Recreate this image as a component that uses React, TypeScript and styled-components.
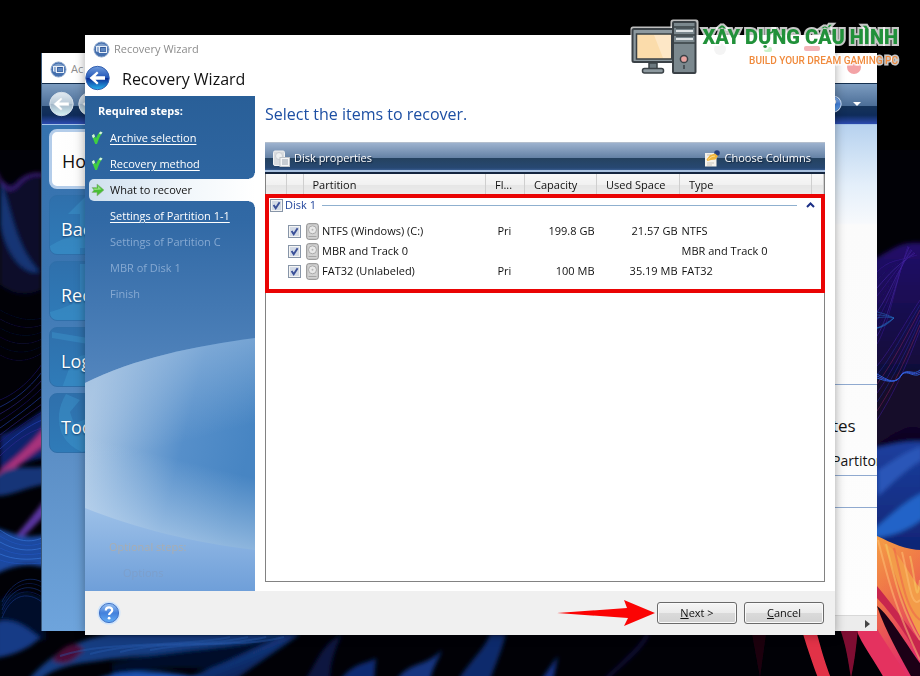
import React, { useState } from "react";
import styled, { createGlobalStyle, css } from "styled-components";

const GlobalStyle = createGlobalStyle`
  *, *::before, *::after { box-sizing: border-box; }
  html, body { margin: 0; background: #000; }
  body, button, input, table {
    font-family: "Open Sans", "Noto Sans", sans-serif;
    font-size: 11px;
    line-height: 16px;
  }
`;

/* ---------- desktop ---------- */

const Desktop = styled.main`
  position: relative;
  min-height: 100vh;
  overflow: hidden;
  background: #000;
`;

const WallpaperSvg = styled.svg`
  position: absolute;
  inset: 0;
  width: 100%;
  height: 100%;
`;

const BackWindow = styled.section`
  position: absolute;
  inset: 53px 43px 45px 41px;
  display: flex;
  flex-direction: column;
  overflow: hidden;
  background: #fff;
  border-left: 1px solid #3b5878;
`;

const FrontWindow = styled.section`
  position: absolute;
  inset: 35px 85px 41px 85px;
  display: flex;
  flex-direction: column;
  background: #fff;
  box-shadow: 0 0 10px rgba(0, 0, 0, 0.35);
`;

const TitleBar = styled.header<{ $height: number }>`
  display: flex;
  align-items: center;
  gap: 4px;
  flex: none;
  height: ${(p) => p.$height}px;
  padding: 2px 8px 0;
  color: #8d8d8d;
  background: #fff;
`;

/* ---------- window behind ---------- */

const NavBar = styled.div`
  display: flex;
  align-items: center;
  gap: 4px;
  flex: none;
  height: 42px;
  padding: 0 15px 0 7px;
  border-top: 1px solid #15304f;
  border-bottom: 1px solid #a5c4ea;
  background: linear-gradient(#7c9cc0 0, #4d6f98 54%, #15335a 56%, #0f2c5a 78%, #2c4bb0 100%);
`;

const Spacer = styled.span`
  flex: 1;
`;

const BackBody = styled.div`
  display: flex;
  flex: 1;
  min-height: 0;
`;

const Menu = styled.nav`
  display: flex;
  flex-direction: column;
  gap: 6px;
  width: 170px;
  padding: 4px 7px;
  background: linear-gradient(#3572ae 0, #3b76b2 30%, #5c8fc6 65%, #6ea4dc 100%);
`;

const MenuButton = styled.button<{ $active?: boolean }>`
  position: relative;
  height: 60px;
  padding: 8px 11px 0;
  overflow: hidden;
  text-align: left;
  font-size: 18px;
  line-height: 24px;
  color: #fff;
  text-shadow: 0 1px 2px #123d6b;
  border: 1px solid #2f6fa9;
  border-radius: 8px;
  background: linear-gradient(#2f70ac, #2f7bb8);
  ${(p) =>
    p.$active &&
    css`
      padding: 4px 10px 0;
      color: #111;
      text-shadow: none;
      border: 3px solid #b4cdea;
      background: linear-gradient(90deg, #fff, #f2f2f2);
    `}
`;

const MenuArt = styled.svg`
  position: absolute;
  left: 0;
  top: 0;
`;

const MenuText = styled.span`
  position: relative;
`;

const BackMain = styled.div`
  display: flex;
  flex-direction: column;
  flex: 1;
  color: #151515;
  background: linear-gradient(#b7d2ef 0, #e4effa 60px, #f7f9fc 98px, #fbfbfb 100px, #fdfdfd 100%);
`;

const BackSection = styled.div<{ $height: number }>`
  display: flex;
  flex-direction: column;
  justify-content: flex-end;
  gap: 12px;
  height: ${(p) => p.$height}px;
  padding: 0 0 3px calc(100% - 45px);
  border-bottom: 1px solid #8fa9cf;
  white-space: nowrap;
  font-size: 14px;
  line-height: 22px;
`;

const BackHeading = styled.strong`
  font-size: 17px;
  line-height: 24px;
  font-weight: 400;
`;

const HScroll = styled.div`
  display: flex;
  align-items: center;
  justify-content: flex-end;
  height: 16px;
  margin-top: auto;
  padding-right: 7px;
  border-top: 1px solid #d8d8d8;
  background: #ececec;
`;

/* ---------- wizard ---------- */

const WizardHeader = styled.div`
  display: flex;
  align-items: center;
  gap: 12px;
  flex: none;
  height: 35px;
  padding-bottom: 2px;
`;

const WizardTitle = styled.h1`
  margin: 0;
  padding-top: 2px;
  font-size: 16px;
  line-height: 22px;
  font-weight: 400;
  color: #111;
`;

const RoundButton = styled.button`
  display: flex;
  padding: 0;
  border: 0;
  background: none;
`;

const WizardBody = styled.div`
  display: flex;
  flex: 1;
  min-height: 0;
`;

const Sidebar = styled.aside`
  position: relative;
  display: flex;
  flex-direction: column;
  flex: none;
  width: 170px;
  padding: 5px 0 0;
  color: #fff;
`;

const SidebarArt = styled.svg`
  position: absolute;
  inset: 0;
  width: 100%;
  height: 100%;
`;

const StepsTitle = styled.h2`
  position: relative;
  margin: 0 0 6px;
  padding: 2px 0 2px 13px;
  font-size: 11px;
  line-height: 16px;
  font-weight: 700;
`;

const Steps = styled.ol`
  position: relative;
  flex: 1;
  margin: 0;
  padding: 0;
  list-style: none;
`;

const Step = styled.li<{ $state: string }>`
  position: relative;
  display: flex;
  align-items: center;
  height: 22px;
  margin: 0 0 4px 4px;
  color: ${(p) => (p.$state === "off" ? "#86a9d2" : "#fff")};
  ${(p) =>
    p.$state === "current" &&
    css`
      color: #111;
      border-radius: 5px 0 0 5px;
      background: linear-gradient(90deg, #cfe0ee, #f2f7fb 60%, #fff);
      &::before,
      &::after {
        content: "";
        position: absolute;
        right: 0;
        width: 6px;
        height: 6px;
      }
      &::before {
        top: -6px;
        background: radial-gradient(circle at 0 0, transparent 5px, #fff 6px);
      }
      &::after {
        bottom: -6px;
        background: radial-gradient(circle at 0 100%, transparent 5px, #fff 6px);
      }
    `}
`;

const StepMark = styled.span`
  display: flex;
  width: 21px;
  padding-left: 2px;
`;

const StepLink = styled.a`
  color: #fff;
  text-underline-offset: 2px;
`;

const Optional = styled.div<{ $faint?: boolean }>`
  position: relative;
  height: 26px;
  padding-left: ${(p) => (p.$faint ? 38 : 24)}px;
  color: ${(p) => (p.$faint ? "#7d9fcb" : "#a9adb0")};
`;

const Content = styled.div`
  display: flex;
  flex-direction: column;
  flex: 1;
  min-width: 0;
  padding: 6px 10px 9px;
`;

const Instruction = styled.h2`
  margin: 0 0 16px;
  font-size: 16px;
  line-height: 24px;
  font-weight: 400;
  color: #1d4fa3;
`;

const Toolbar = styled.div`
  display: flex;
  align-items: center;
  justify-content: space-between;
  flex: none;
  height: 32px;
  padding: 1px 14px 0 8px;
  border-top: 1px solid #b4bfce;
  border-bottom: 2px solid #14253f;
  background: linear-gradient(#9db2ce 0, #6683a6 50%, #25425f 52%, #274872 86%, #35588a 92%, #a9c1df 94%);
`;

const ToolButton = styled.button`
  display: flex;
  align-items: center;
  gap: 4px;
  padding: 0;
  border: 0;
  color: #fff;
  background: none;
  text-shadow: 1px 1px 1px #14253f;
`;

const Panel = styled.div`
  flex: 1;
  min-height: 0;
  border: 1px solid #828282;
  border-top: 0;
`;

const Marked = styled.div`
  position: relative;
  margin: 0 -1px;
  padding: 0 1px 12px;
`;

const MarkFrame = styled.span`
  position: absolute;
  inset: 20px 0 0;
  border: 4px solid #ea0404;
  pointer-events: none;
`;

const Table = styled.table`
  width: 100%;
  table-layout: fixed;
  border-collapse: collapse;
  color: #111;
  td,
  th {
    padding: 0;
    font-weight: 400;
    text-align: left;
    white-space: nowrap;
  }
`;

const Col = styled.col<{ $w?: number }>`
  width: ${(p) => (p.$w ? `${p.$w}px` : "auto")};
`;

const HeadCell = styled.th`
  height: 21px;
  border-right: 1px solid #cfcfcf;
  background: linear-gradient(#f8f8f8 0, #f1f1f1 50%, #e5e5e5 52%, #ededed 100%);
  && {
    padding: 0 0 0 9px;
  }
`;

const Row = styled.tr`
  height: 20px;
`;

const NumCell = styled.td`
  && {
    padding-right: 2px;
    text-align: right;
  }
`;

const FlagCell = styled.td`
  && {
    padding-left: 12px;
  }
`;

const TypeCell = styled.td`
  && {
    padding-left: 2px;
  }
`;

const CheckCell = styled.td`
  && {
    padding-left: 22px;
  }
`;

const NameLabel = styled.label`
  display: flex;
  align-items: center;
  gap: 3px;
  padding-left: 3px;
`;

const GroupCell = styled.td`
  height: 26px;
  vertical-align: top;
`;

const GroupLine = styled.div`
  display: flex;
  align-items: center;
  height: 20px;
  padding: 0 9px 0 4px;
  color: #22459c;
`;

const GroupLabel = styled.label`
  padding: 0 6px 0 2px;
`;

const Rule = styled.span`
  flex: 1;
  height: 1px;
  margin-right: 9px;
  background: #8fb0cf;
`;

const Collapse = styled.button`
  display: flex;
  padding: 0;
  border: 0;
  background: none;
`;

const Check = styled.input`
  appearance: none;
  display: block;
  flex: none;
  width: 13px;
  height: 13px;
  margin: 0;
  border: 1px solid #8795a8;
  outline: 1px solid #f4f4f4;
  outline-offset: -2px;
  background: #d3dae6;
  &:checked {
    background: #d3dae6
      url("data:image/svg+xml,%3Csvg xmlns='http://www.w3.org/2000/svg' viewBox='0 0 11 11'%3E%3Cpath d='M2.6 5 4.7 8.3 8.6 2.2' fill='none' stroke='%23394f98' stroke-width='1.9'/%3E%3C/svg%3E");
  }
`;

const Footer = styled.footer`
  display: flex;
  align-items: center;
  flex: none;
  height: 44px;
  padding: 0 11px 0 12px;
  background: #f0f0f0;
`;

const ActionButton = styled.button`
  width: 80px;
  height: 22px;
  margin-left: 7px;
  padding: 0;
  line-height: 18px;
  color: #111;
  border: 1px solid #6a6a6a;
  border-radius: 3px;
  background: linear-gradient(#f5f5f5 0, #ebebeb 50%, #dadada 52%, #d2d2d2 100%);
  box-shadow: inset 0 0 0 1px #fafafa;
`;

const ArrowArt = styled.svg`
  margin-right: -5px;
`;

/* ---------- watermark ---------- */

const Watermark = styled.div`
  position: absolute;
  top: 18px;
  right: 22px;
  display: flex;
  align-items: flex-start;
  gap: 3px;
  text-align: right;
`;

const Blots = styled.svg`
  position: absolute;
  right: 0;
  top: 0;
`;

const BrandName = styled.div`
  position: relative;
  padding-top: 4px;
  font-family: Roboto, "Open Sans", sans-serif;
  font-size: 20px;
  line-height: 30px;
  font-weight: 900;
  white-space: nowrap;
  color: #21913a;
  background: linear-gradient(90deg, #35a83f, #0c7430);
  -webkit-text-stroke: 4px rgba(255, 255, 255, 0.78);
  paint-order: stroke fill;
  background: none;
`;

const BrandTag = styled.div`
  position: relative;
  font-family: Roboto, "Open Sans", sans-serif;
  font-size: 10px;
  line-height: 17px;
  font-weight: 500;
  white-space: nowrap;
  color: #f08a3c;
  -webkit-text-stroke: 3px rgba(255, 255, 255, 0.78);
  paint-order: stroke fill;
`;

/* ---------- drawings ---------- */

const strands = (
  count: number,
  make: (i: number) => string,
  colors: string[],
  width = 1,
  opacity = 0.5
) =>
  Array.from({ length: count }, (_, i) => (
    <path key={i} d={make(i)} fill="none" stroke={colors[i % colors.length]} strokeWidth={width} opacity={opacity} />
  ));

const Wallpaper = () => (
  <WallpaperSvg viewBox="0 0 920 676" preserveAspectRatio="none" aria-hidden="true">
    <defs>
      <linearGradient id="wBlue" x1="0" y1="0" x2="1" y2="1">
        <stop offset="0" stopColor="#1f4a98" />
        <stop offset=".5" stopColor="#123478" />
        <stop offset="1" stopColor="#040a2a" />
      </linearGradient>
      <linearGradient id="wViolet" x1="0" y1="0" x2="0" y2="1">
        <stop offset="0" stopColor="#22106a" />
        <stop offset=".5" stopColor="#130840" />
        <stop offset="1" stopColor="#07041c" />
      </linearGradient>
      <linearGradient id="wRoyal" x1="0" y1="0" x2="0" y2="1">
        <stop offset="0" stopColor="#1c3f9e" />
        <stop offset="1" stopColor="#0d1d6a" />
      </linearGradient>
      <linearGradient id="wFire" x1="0" y1="0" x2=".3" y2="1">
        <stop offset="0" stopColor="#f5a144" />
        <stop offset=".45" stopColor="#ef7448" />
        <stop offset="1" stopColor="#e23068" />
      </linearGradient>
      <filter id="wSoft" x="-5%" y="-5%" width="110%" height="110%">
        <feGaussianBlur stdDeviation="2" />
      </filter>
      <filter id="wFine" x="-5%" y="-5%" width="110%" height="110%">
        <feGaussianBlur stdDeviation=".6" />
      </filter>
    </defs>
    <rect width="920" height="676" fill="#010106" />
    <rect width="920" height="150" fill="#000" />
    <g filter="url(#wSoft)">
      <path d="M0 178 Q8 188 18 180 Q30 170 41 176 V290 Q20 300 0 285Z" fill="#07082a" />
      <path d="M0 180 C10 200 14 246 40 272 C20 276 6 250 0 225Z" fill="#123474" />
      <path d="M-4 172 Q8 200 20 182 Q32 170 46 176" fill="none" stroke="#4a2490" strokeWidth="2" />
      <path d="M0 435 C16 430 28 422 46 408 V458 C20 460 8 474 0 480Z" fill="#10206c" />
      <path d="M-4 474 C16 458 30 446 46 426 V444 C28 456 14 470 -4 480Z" fill="#a8307c" />
      <path d="M-4 476 C14 462 30 470 46 466 V484 C24 488 12 496 -4 496Z" fill="#133478" />
      <path d="M4 550 C20 530 30 520 46 498 V514 C32 528 20 542 4 550Z" fill="#5a35a0" />
      <path d="M-4 528 C14 534 28 540 46 534 V568 C28 562 12 566 -4 574Z" fill="#1a48a0" />
      <path d="M0 600 C12 590 26 588 46 600 V640 H0Z" fill="#050c2a" />
      <path d="M-4 622 C14 616 30 630 40 638 C28 650 10 656 -4 658Z" fill="#153a86" />
      <path d="M28 680 C50 655 75 640 110 634 H290 C250 652 150 652 90 662 C70 664 50 670 40 680Z" fill="#173c82" />
      <path d="M112 664 C170 648 230 650 280 636 L225 672 C180 664 140 668 112 680Z" fill="#04102c" />
      <path d="M52 660 C64 644 76 640 84 650 C74 660 66 668 52 660Z" fill="#4a0f38" />
      <path d="M182 680 C225 664 262 646 285 634 H300 C276 652 250 668 236 680Z" fill="url(#wBlue)" />
      <path d="M96 680 C120 668 170 670 206 680Z" fill="#1c53b4" />
      <path d="M305 680 C318 660 322 644 342 634 C334 652 330 664 330 680Z" fill="#081540" />
      <path d="M340 680 C354 662 366 664 376 658 L374 680Z" fill="#0f2c72" />
      <path d="M396 680 C412 660 424 668 442 650 C436 664 432 670 430 680Z" fill="#123480" />
      <path d="M458 680 C474 656 484 650 490 634 H506 C500 656 494 668 490 680Z" fill="#0f2a6c" />
      <path d="M541 680 L558 656 L553 680Z" fill="#123284" />
      <path d="M605 680 C625 660 640 650 648 634" fill="none" stroke="#1d1760" strokeWidth="2" />
      <path d="M873 260 C892 250 900 240 924 243 V460 H873Z" fill="url(#wViolet)" />
      <path d="M873 448 C890 446 904 440 924 442 V580 H873Z" fill="url(#wRoyal)" />
      <path d="M873 530 C890 516 906 500 924 492 V518 C908 530 894 536 873 538Z" fill="#2464c8" />
      <path d="M873 380 C895 378 905 365 924 372 V430 C905 420 890 440 873 446Z" fill="#16072c" />
      <path d="M878 470 C892 462 904 452 922 446 V460 C904 470 890 486 878 496Z" fill="#2a56b8" />
    </g>
    <g filter="url(#wFine)">
      <path d="M877 536 C892 543 906 550 922 550 V678 H900 C890 655 880 640 872 628Z" fill="url(#wFire)" />
      <path d="M882 542 C900 580 900 600 922 640 V590 C908 575 900 550 882 542Z" fill="#f39c48" />
      <path d="M877 598 C890 612 904 630 922 662 V644 C908 626 895 608 877 586Z" fill="#c8284e" />
      <path d="M856 629 H877 C890 650 900 664 908 678 H884 C874 660 862 645 856 629Z" fill="#e4315f" />
      <path d="M877 606 C890 616 906 644 922 666 V678 H912 C900 656 886 632 877 606Z" fill="#1c0614" />
      <path d="M803 634 H817 C822 652 826 666 831 678 H818 C812 662 808 650 803 634Z" fill="#e23346" />
      <path d="M840 629 H858 C856 650 854 664 851 678 C848 660 846 645 840 629Z" fill="#7e1030" />
      <path d="M752 634 H766 L760 678Z" fill="#1c0510" />
      {strands(9, (i) => `M0 ${400 + i * 7} C14 ${394 + i * 6} 28 ${384 + i * 6} 42 ${364 + i * 8}`, ["#241a86", "#2c4ed0", "#3a2ba0"])}
      {strands(6, (i) => `M0 ${310 + i * 9} C14 ${318 + i * 9} 28 ${322 + i * 8} 42 ${318 + i * 7}`, ["#0d1136", "#14124a"])}
      {strands(6, (i) => `M0 ${530 + i * 6} C14 ${540 + i * 5} 28 ${544 + i * 4} 42 ${538 + i * 5}`, ["#3f86ee", "#2459c8"])}
      {strands(5, (i) => `M2 ${618 - i * 4} C10 ${596 - i * 3} 26 ${590 - i * 4} 42 ${602 - i * 5}`, ["#1d3f9c", "#12286c"])}
      {strands(10, (i) => `M877 ${344 - i * 8} C890 ${322 - i * 7} 896 ${280 - i * 2} ${908 + i} ${246 + i}`, ["#3b1c98", "#5030b4", "#261070"])}
      {strands(7, (i) => `M877 ${420 - i * 9} C892 ${396 - i * 8} 904 ${372 - i * 8} 920 ${330 - i * 5}`, ["#4420a4", "#8a2560", "#26309c"])}
      {strands(3, (i) => `M877 ${374 + i * 2} C888 ${380 + i} 896 ${386 - i} 902 374 C908 ${368 + i} 914 ${376 + i} 920 ${370 + i * 2}`, ["#2f64de", "#3a5ae0"], 1, 0.9)}
      {strands(3, (i) => `M877 ${312 + i * 3} C886 ${314 + i} 890 ${316 + i} 894 318 C888 ${322 + i} 882 ${326 + i} 877 328`, ["#2372c8"])}
      {strands(5, (i) => `M${878 + i * 8} ${540 + i * 4} C${888 + i * 7} 580 ${896 + i * 5} 610 920 ${660 - i * 20}`, ["#ffc37a", "#f7cf6a", "#ee5a4c"], 2)}
      {strands(4, (i) => `M${60 + i * 30} ${656 - i * 2} C${110 + i * 30} 640 ${180 + i * 20} 648 ${230 + i * 18} 637`, ["#2a5cae"], 2, 0.4)}
    </g>
  </WallpaperSvg>
);

const AppIcon = () => (
  <svg width="17" height="17" viewBox="0 0 17 17" aria-hidden="true">
    <circle cx="8.5" cy="8.5" r="7.5" fill="#446fae" stroke="#8aa5cc" />
    <path d="M1.5 6 Q8.500 -1 15.500 6Z" fill="#7f9fca" />
    <path d="M3 5.500H13.500V11.500H6.500V5.500" fill="#31599a" stroke="#e8eff8" strokeWidth="1.200" />
    <path d="M3.500 5.500V10.500M5 5.500V11" fill="none" stroke="#dfe9f5" />
    <rect x="8" y="7" width="4.500" height="3.500" fill="#5d86c0" />
  </svg>
);

const BackIcon = ({ pale }: { pale?: boolean }) => {
  const id = pale ? "paleBall" : "blueBall";
  return (
    <svg width="25" height="26" viewBox="0 0 25 26" aria-hidden="true">
      <defs>
        <linearGradient id={id} x1="0" y1="0" x2="0" y2="1">
          <stop offset="0" stopColor={pale ? "#e3ebf2" : "#6f9bdd"} />
          <stop offset=".48" stopColor={pale ? "#b9cad8" : "#2558b8"} />
          <stop offset=".52" stopColor={pale ? "#a3b7c9" : "#0b2d96"} />
          <stop offset="1" stopColor={pale ? "#d6f3f5" : "#25b4ee"} />
        </linearGradient>
      </defs>
      <circle cx="12.500" cy="13" r="11.700" fill={`url(#${id})`} stroke={pale ? "#d5dfe9" : "#3561b0"} />
      <path
        d="M4.500 13 12 6.500 13.500 8 10.500 11.200H20V14.800H10.500L13.500 18 12 19.500Z"
        fill="#fff"
        stroke={pale ? "#c3d0da" : "none"}
        strokeWidth=".5"
      />
    </svg>
  );
};

const HelpIcon = ({ size = 24 }: { size?: number }) => (
  <svg width={size} height={size} viewBox="0 0 24 24" aria-hidden="true">
    <defs>
      <linearGradient id="helpBall" x1="0" y1="0" x2="0" y2="1">
        <stop offset="0" stopColor="#9cc4f4" />
        <stop offset=".5" stopColor="#4280dc" />
        <stop offset="1" stopColor="#62adf6" />
      </linearGradient>
    </defs>
    <circle cx="12" cy="12" r="11.500" fill="#cfe4fb" />
    <circle cx="12" cy="12" r="9.600" fill="url(#helpBall)" stroke="#4273c6" />
    <path d="M8.800 9.500C8.800 5.200 15.400 5.400 15.200 9.300C15 11.600 12.100 11.600 12.100 14" fill="none" stroke="#fff" strokeWidth="2.200" />
    <circle cx="12.100" cy="17.200" r="1.400" fill="#fff" />
  </svg>
);

const TickIcon = () => (
  <svg width="12" height="14" viewBox="0 0 12 14" aria-hidden="true">
    <path d="M.8 4.500 3 3 5 7.500C6 4.500 7.500 2 9.500.5L11.500 1.500C9 4.500 7.500 8.500 6 13H4.200Z" fill="#3fd03f" />
    <path d="M.8 4.500 3 3 4 5.500 2 7.200ZM7.800 2.200 9.500.5 11.500 1.500 10 3.600Z" fill="#d6f0e0" />
  </svg>
);

const GoIcon = () => (
  <svg width="14" height="14" viewBox="0 0 14 14" aria-hidden="true">
    <path d="M1 4.500H6V1L13 7 6 13V9.500H1L3 7Z" fill="#48bf34" stroke="#8fae8a" strokeWidth=".6" />
    <path d="M2.500 5.500H7V3L10.500 6.500 3.500 7Z" fill="#93e07c" />
  </svg>
);

const DriveIcon = () => (
  <svg width="13" height="17" viewBox="0 0 13 17" aria-hidden="true">
    <rect x=".7" y=".7" width="11.600" height="15.600" rx="2" fill="#d2d2d2" stroke="#8b8b8b" />
    <circle cx="6.500" cy="6.800" r="4" fill="#e9e9e9" stroke="#aaa" />
    <circle cx="6.500" cy="6.800" r="1" fill="#b5b5b5" />
    <path d="M2.500 13.500H10.500" stroke="#a5a5a5" />
  </svg>
);

const PropertiesIcon = () => (
  <svg width="17" height="17" viewBox="0 0 17 17" aria-hidden="true">
    <rect x=".5" y="1" width="11" height="14.500" rx="1.500" fill="#d9dcdf" stroke="#f3f3f3" />
    <circle cx="6" cy="6" r="3.500" fill="#eef0f1" stroke="#c9cdd2" />
    <rect x="7" y="7.500" width="9.500" height="9" fill="#f5f6f7" stroke="#c1c5ca" />
    <path d="M9 10H15M9 12H15M9 14H15" stroke="#9aa3ad" />
  </svg>
);

const ColumnsIcon = () => (
  <svg width="17" height="17" viewBox="0 0 17 17" aria-hidden="true">
    <rect x="1" y="3" width="11.500" height="13.500" fill="#f4f1ea" />
    <path d="M3 5H7M3 13H10M3 15H8" stroke="#c9c5bd" />
    <circle cx="13" cy="3" r="2.800" fill="#25407e" />
    <path d="M2.500 9.500 6 5 11 3.500 14 6 11.500 9.500 7 10 3.500 11Z" fill="#f0b43c" />
    <path d="M4 9.500 8 6.500 11 6" fill="none" stroke="#fbdc8a" />
  </svg>
);

const ComputerLogo = () => (
  <svg width="69" height="58" viewBox="0 0 69 58" aria-hidden="true">
    <g stroke="#fff" strokeOpacity=".75" strokeWidth="5" strokeLinejoin="round" fill="none">
      <path d="M3 11H43V45H3Z" />
      <path d="M43 4H66V54H43Z" />
      <path d="M13 50H34V54H13Z" />
    </g>
    <rect x="2.500" y="11" width="43" height="33" rx="1.500" fill="#8d999f" stroke="#3a4146" strokeWidth="2" />
    <rect x="6.500" y="16" width="35" height="25" fill="#fbdcab" stroke="#3a4146" strokeWidth="1.500" />
    <path d="M24 17H41V40H33Z" fill="#fde7c6" />
    <path d="M19 45H27V51H19Z" fill="#6c797f" stroke="#3a4146" strokeWidth="1.500" />
    <rect x="12.500" y="50.500" width="21" height="4.500" rx="2" fill="#8d999f" stroke="#3a4146" strokeWidth="1.500" />
    <rect x="43" y="4" width="22.500" height="51" rx="1" fill="#7b888e" stroke="#3a4146" strokeWidth="2" />
    <path d="M44 9H65M44 17H65M44 25H65" stroke="#3a4146" strokeWidth="1.500" />
    <path d="M46 13H63M46 21H63" stroke="#dfe4e6" strokeWidth="2" />
    <path d="M46 10.500H63M46 18.500H63" stroke="#4c565c" />
    <circle cx="54" cy="41" r="3.600" fill="#e9a3a0" stroke="#3a4146" strokeWidth="1.500" />
    <path d="M54 47V51" stroke="#3a4146" strokeWidth="1.500" />
  </svg>
);

const menuItems = [
  { label: "Home", art: "" },
  { label: "Backup", art: "M18 18 38 -2 V52 H30 V18Z M0 50 Q12 42 30 38 V60 H0Z" },
  { label: "Recovery", art: "M30 2H38V60H0V50Q14 46 22 42L30 34Z" },
  { label: "Log", art: "M2 4 38 10V16L2 10Z M12 60 20 38 Q30 24 38 28V60Z" },
  { label: "Tools", art: "M16 0Q4 20 12 40Q18 52 32 58L38 56V24L24 30 20 18 30 6Z" },
];

const steps = [
  { label: "Archive selection", state: "done" },
  { label: "Recovery method", state: "done" },
  { label: "What to recover", state: "current" },
  { label: "Settings of Partition 1-1", state: "next" },
  { label: "Settings of Partition C", state: "off" },
  { label: "MBR of Disk 1", state: "off" },
  { label: "Finish", state: "off" },
];

const partitions = [
  { id: "c", name: "NTFS (Windows) (C:)", flag: "Pri", capacity: "199.8 GB", used: "21.57 GB", type: "NTFS" },
  { id: "mbr", name: "MBR and Track 0", flag: "", capacity: "", used: "", type: "MBR and Track 0" },
  { id: "fat", name: "FAT32 (Unlabeled)", flag: "Pri", capacity: "100 MB", used: "35.19 MB", type: "FAT32" },
];

export default function App() {
  const [checked, setChecked] = useState<Record<string, boolean>>({ c: true, mbr: true, fat: true });
  const [open, setOpen] = useState(true);
  const all = partitions.every((p) => checked[p.id]);

  return (
    <>
      <GlobalStyle />
      <Desktop>
        <Wallpaper />

        <BackWindow>
          <TitleBar $height={30}>
            <AppIcon />
            <span>Ac</span>
          </TitleBar>
          <NavBar>
            <RoundButton aria-label="Back">
              <BackIcon pale />
            </RoundButton>
            <RoundButton aria-label="Forward">
              <BackIcon pale />
            </RoundButton>
            <Spacer />
            <HelpIcon size={18} />
            <svg width="16" height="8" viewBox="0 0 16 8" aria-hidden="true">
              <path d="M7 2H15L11 6Z" fill="#fff" />
            </svg>
          </NavBar>
          <BackBody>
            <Menu>
              {menuItems.map((m, i) => (
                <MenuButton key={m.label} $active={i === 0}>
                  <MenuArt width="38" height="60" viewBox="0 0 38 60" aria-hidden="true">
                    <path d={m.art} fill="#3f9ad0" opacity=".4" />
                  </MenuArt>
                  <MenuText>{m.label}</MenuText>
                </MenuButton>
              ))}
            </Menu>
            <BackMain>
              <BackSection $height={260} />
              <BackSection $height={91}>
                <BackHeading>tes</BackHeading>
                <span>Partiton</span>
              </BackSection>
              <BackSection $height={32} />
              <HScroll>
                <svg width="5" height="8" viewBox="0 0 5 8" aria-hidden="true">
                  <path d="M0 0V8L5 4Z" fill="#444" />
                </svg>
              </HScroll>
            </BackMain>
          </BackBody>
        </BackWindow>

        <FrontWindow>
          <TitleBar $height={26}>
            <AppIcon />
            <span>Recovery Wizard</span>
          </TitleBar>
          <WizardHeader>
            <RoundButton aria-label="Back">
              <BackIcon />
            </RoundButton>
            <WizardTitle>Recovery Wizard</WizardTitle>
          </WizardHeader>

          <WizardBody>
            <Sidebar>
              <SidebarArt viewBox="0 0 170 495" preserveAspectRatio="none" aria-hidden="true">
                <defs>
                  <linearGradient id="sTop" x1="0" y1="0" x2="0" y2="1">
                    <stop offset="0" stopColor="#295f98" />
                    <stop offset=".25" stopColor="#3169a5" />
                    <stop offset=".6" stopColor="#5587bf" />
                  </linearGradient>
                  <linearGradient id="sDisc" gradientUnits="userSpaceOnUse" x1="0" y1="330" x2="160" y2="370">
                    <stop offset="0" stopColor="#b3cce6" />
                    <stop offset=".3" stopColor="#82acd8" />
                    <stop offset=".6" stopColor="#568fca" />
                    <stop offset="1" stopColor="#4785c3" />
                  </linearGradient>
                  <linearGradient id="sEdge" gradientUnits="userSpaceOnUse" x1="100" y1="255" x2="122" y2="340">
                    <stop offset="0" stopColor="#9cbde0" stopOpacity=".55" />
                    <stop offset="1" stopColor="#9cbde0" stopOpacity="0" />
                  </linearGradient>
                  <linearGradient id="sRim" gradientUnits="userSpaceOnUse" x1="100" y1="365" x2="82" y2="438">
                    <stop offset="0" stopColor="#c4dbf2" stopOpacity="0" />
                    <stop offset="1" stopColor="#c4dbf2" stopOpacity=".6" />
                  </linearGradient>
                  <linearGradient id="sFloor" x1="0" y1="0" x2="0" y2="1">
                    <stop offset="0" stopColor="#9cc0e8" />
                    <stop offset="1" stopColor="#6f9fd9" />
                  </linearGradient>
                </defs>
                <rect width="170" height="495" fill="url(#sTop)" />
                <path d="M0 287C50 262 110 250 170 242V460H0Z" fill="url(#sDisc)" />
                <path d="M0 287C50 262 110 250 170 242V460H0Z" fill="url(#sEdge)" />
                <path d="M0 287C50 262 110 250 170 242V460H0Z" fill="url(#sRim)" />
                <path d="M0 412C50 432 110 447 170 454V495H0Z" fill="url(#sFloor)" />
              </SidebarArt>
              <StepsTitle>Required steps:</StepsTitle>
              <Steps>
                {steps.map((s) => (
                  <Step key={s.label} $state={s.state}>
                    <StepMark>
                      {s.state === "done" && <TickIcon />}
                      {s.state === "current" && <GoIcon />}
                    </StepMark>
                    {s.state === "done" || s.state === "next" ? <StepLink href="#">{s.label}</StepLink> : <span>{s.label}</span>}
                  </Step>
                ))}
              </Steps>
              <Optional>Optional steps:</Optional>
              <Optional $faint>Options</Optional>
            </Sidebar>

            <Content>
              <Instruction>Select the items to recover.</Instruction>
              <Toolbar>
                <ToolButton>
                  <PropertiesIcon />
                  Disk properties
                </ToolButton>
                <ToolButton>
                  <ColumnsIcon />
                  Choose Columns
                </ToolButton>
              </Toolbar>
              <Panel>
                <Marked>
                  <Table>
                    <colgroup>
                      <Col $w={20} />
                      <Col $w={17} />
                      <Col />
                      <Col $w={39} />
                      <Col $w={72} />
                      <Col $w={83} />
                      <Col $w={132} />
                      <Col $w={12} />
                    </colgroup>
                    <thead>
                      <tr>
                        <HeadCell />
                        <HeadCell />
                        <HeadCell scope="col">Partition</HeadCell>
                        <HeadCell scope="col">Fl...</HeadCell>
                        <HeadCell scope="col">Capacity</HeadCell>
                        <HeadCell scope="col">Used Space</HeadCell>
                        <HeadCell scope="col">Type</HeadCell>
                        <HeadCell />
                      </tr>
                    </thead>
                    <tbody>
                      <tr>
                        <GroupCell colSpan={8}>
                          <GroupLine>
                            <Check
                              type="checkbox"
                              id="disk1"
                              checked={all}
                              onChange={(e) => setChecked({ c: e.target.checked, mbr: e.target.checked, fat: e.target.checked })}
                            />
                            <GroupLabel htmlFor="disk1">Disk 1</GroupLabel>
                            <Rule />
                            <Collapse aria-label="Collapse Disk 1" aria-expanded={open} onClick={() => setOpen(!open)}>
                              <svg width="9" height="6" viewBox="0 0 9 6" aria-hidden="true">
                                <path d="M1 5 4.500 1.500 8 5" fill="none" stroke="#1b2f86" strokeWidth="2" />
                              </svg>
                            </Collapse>
                          </GroupLine>
                        </GroupCell>
                      </tr>
                      {open &&
                        partitions.map((p) => (
                          <Row key={p.id}>
                            <CheckCell colSpan={2}>
                              <Check
                                type="checkbox"
                                id={p.id}
                                checked={checked[p.id]}
                                onChange={(e) => setChecked({ ...checked, [p.id]: e.target.checked })}
                              />
                            </CheckCell>
                            <td>
                              <NameLabel htmlFor={p.id}>
                                <DriveIcon />
                                {p.name}
                              </NameLabel>
                            </td>
                            <FlagCell>{p.flag}</FlagCell>
                            <NumCell>{p.capacity}</NumCell>
                            <NumCell>{p.used}</NumCell>
                            <TypeCell colSpan={2}>{p.type}</TypeCell>
                          </Row>
                        ))}
                    </tbody>
                  </Table>
                  <MarkFrame />
                </Marked>
              </Panel>
            </Content>
          </WizardBody>

          <Footer>
            <RoundButton aria-label="Help">
              <HelpIcon />
            </RoundButton>
            <Spacer />
            <ArrowArt width="98" height="28" viewBox="0 0 98 28" aria-hidden="true">
              <path d="M0 14 70 9 67 1 98 14 67 27 71 19Z" fill="#fb0404" />
            </ArrowArt>
            <ActionButton>
              <u>N</u>ext &gt;
            </ActionButton>
            <ActionButton>
              <u>C</u>ancel
            </ActionButton>
          </Footer>
        </FrontWindow>

        <Watermark>
          <Blots width="270" height="60" viewBox="0 0 270 60" aria-hidden="true">
            <circle cx="92" cy="31" r="6" fill="#f4f4f4" />
            <rect x="136" y="29" width="8" height="5" rx="2" fill="#c9f2cb" />
            <rect x="176" y="28" width="16" height="5" rx="2" fill="#f3b4b8" />
            <circle cx="226" cy="49" r="7" fill="#f3a3a6" />
          </Blots>
          <ComputerLogo />
          <div>
            <BrandName>XÂY DỰNG CẤU HÌNH</BrandName>
            <BrandTag>BUILD YOUR DREAM GAMING PC</BrandTag>
          </div>
        </Watermark>
      </Desktop>
    </>
  );
}
